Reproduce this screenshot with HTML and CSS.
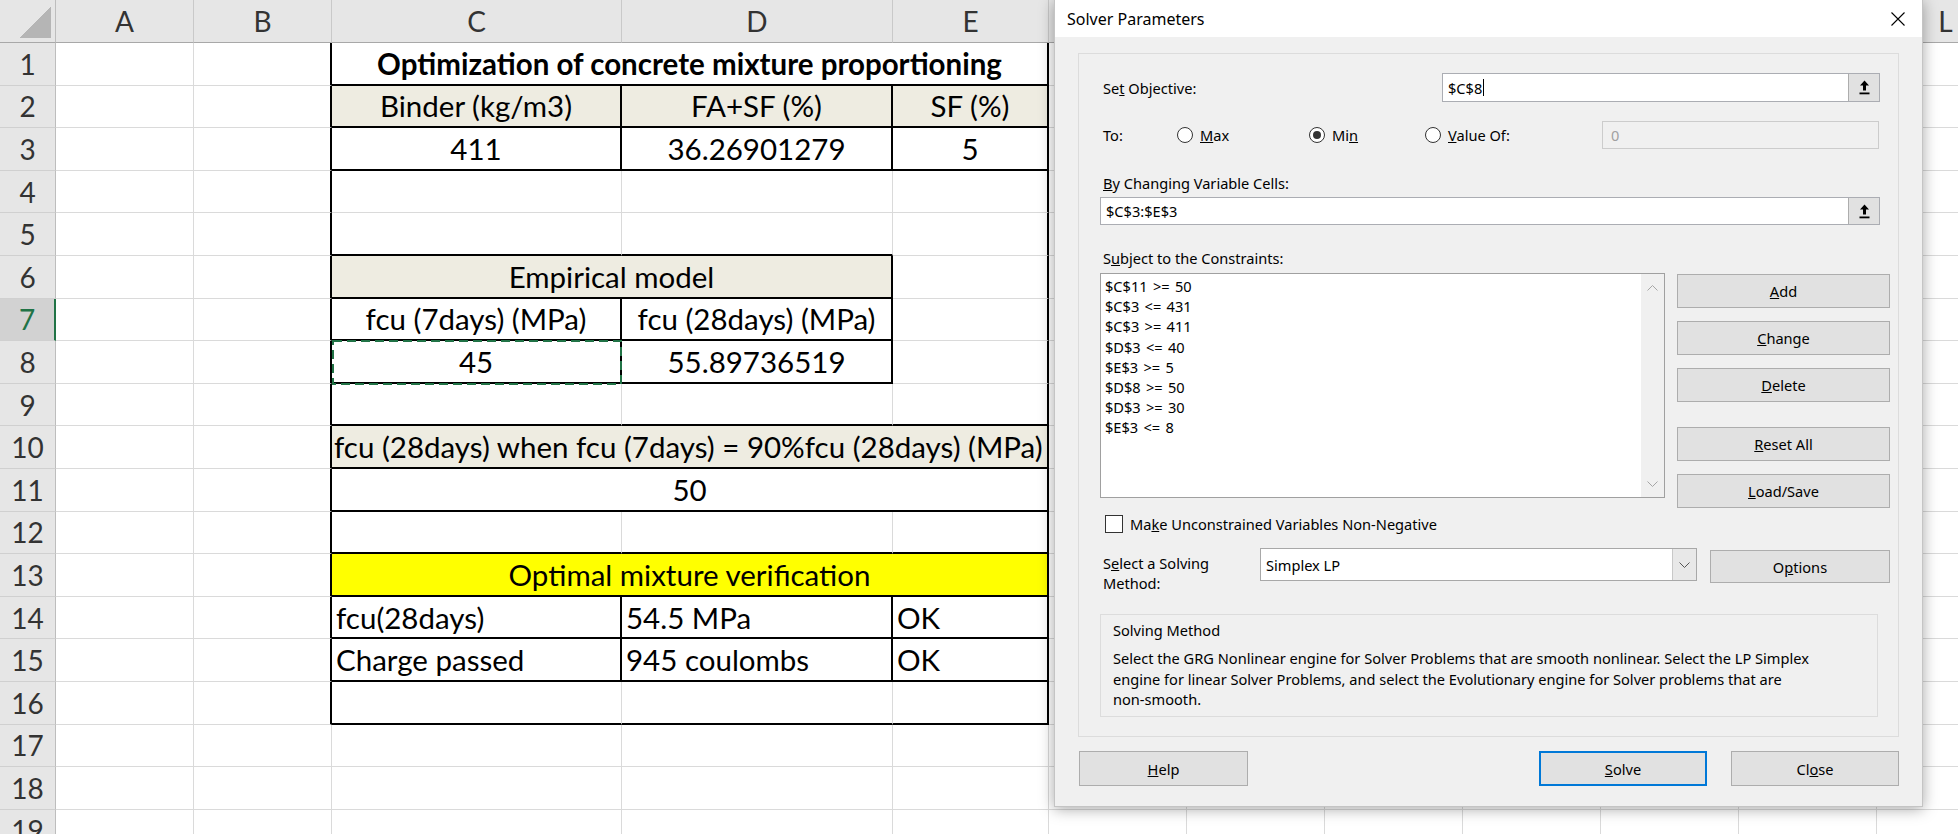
FILE: index.html
```html
<!DOCTYPE html>
<html>
<head>
<meta charset="utf-8">
<title>Solver Parameters</title>
<link rel="stylesheet" href="styles.css">
</head>
<body>
<div class="sheet">
  <div class="corner"><div class="tri"></div></div>
  <div class="ch">A</div><div class="ch">B</div><div class="ch">C</div><div class="ch">D</div><div class="ch">E</div>
  <div class="ch">F</div><div class="ch">G</div><div class="ch">H</div><div class="ch">I</div><div class="ch">J</div><div class="ch">K</div><div class="ch">L</div>

  <div class="rh">1</div><div class="c"></div><div class="c kr"></div>
  <div class="c s3 kr kb bold">Optimization of concrete mixture proportioning</div><div class="rest"></div>

  <div class="rh">2</div><div class="c"></div><div class="c kr"></div>
  <div class="c tan kr kb">Binder (kg/m3)</div><div class="c tan kr kb">FA+SF (%)</div><div class="c tan kr kb">SF (%)</div><div class="rest"></div>

  <div class="rh">3</div><div class="c"></div><div class="c kr"></div>
  <div class="c kr kb">411</div><div class="c kr kb">36.26901279</div><div class="c kr kb">5</div><div class="rest"></div>

  <div class="rh">4</div><div class="c"></div><div class="c kr"></div>
  <div class="c"></div><div class="c"></div><div class="c kr"></div><div class="rest"></div>

  <div class="rh">5</div><div class="c"></div><div class="c kr"></div>
  <div class="c kb"></div><div class="c kb"></div><div class="c kr"></div><div class="rest"></div>

  <div class="rh">6</div><div class="c"></div><div class="c kr"></div>
  <div class="c s2 tan kr kb">Empirical model</div><div class="c kr"></div><div class="rest"></div>

  <div class="rh sel">7</div><div class="c"></div><div class="c kr"></div>
  <div class="c kr kb">fcu (7days) (MPa)</div><div class="c kr kb">fcu (28days) (MPa)</div><div class="c kr"></div><div class="rest"></div>

  <div class="rh">8</div><div class="c"></div><div class="c kr"></div>
  <div class="c kr kb vis">45<svg class="marq" width="290" height="45" viewBox="0 0 290 45"><rect x="1" y="1" width="288" height="43" fill="none" stroke="#217346" stroke-width="2" stroke-dasharray="9 5"/></svg></div><div class="c kr kb">55.89736519</div><div class="c kr"></div><div class="rest"></div>

  <div class="rh">9</div><div class="c"></div><div class="c kr"></div>
  <div class="c kb"></div><div class="c kb"></div><div class="c kr kb"></div><div class="rest"></div>

  <div class="rh">10</div><div class="c"></div><div class="c kr"></div>
  <div class="c s3 tan kr kb lft">fcu (28days) when fcu (7days) = 90%fcu (28days) (MPa)</div><div class="rest"></div>

  <div class="rh">11</div><div class="c"></div><div class="c kr"></div>
  <div class="c s3 kr kb">50</div><div class="rest"></div>

  <div class="rh">12</div><div class="c"></div><div class="c kr"></div>
  <div class="c kb"></div><div class="c kb"></div><div class="c kr kb"></div><div class="rest"></div>

  <div class="rh">13</div><div class="c"></div><div class="c kr"></div>
  <div class="c s3 yel kr kb">Optimal mixture verification</div><div class="rest"></div>

  <div class="rh">14</div><div class="c"></div><div class="c kr"></div>
  <div class="c kr kb lft">fcu(28days)</div><div class="c kr kb lft">54.5 MPa</div><div class="c kr kb lft">OK</div><div class="rest"></div>

  <div class="rh">15</div><div class="c"></div><div class="c kr"></div>
  <div class="c kr kb lft">Charge passed</div><div class="c kr kb lft">945 coulombs</div><div class="c kr kb lft">OK</div><div class="rest"></div>

  <div class="rh">16</div><div class="c"></div><div class="c kr"></div>
  <div class="c kb"></div><div class="c kb"></div><div class="c kr kb"></div><div class="rest"></div>

  <div class="rh">17</div><div class="c"></div><div class="c"></div>
  <div class="c"></div><div class="c"></div><div class="c"></div><div class="rest"></div>

  <div class="rh">18</div><div class="c"></div><div class="c"></div>
  <div class="c"></div><div class="c"></div><div class="c"></div><div class="rest"></div>

  <div class="rh">19</div><div class="c"></div><div class="c"></div>
  <div class="c"></div><div class="c"></div><div class="c"></div><div class="rest"></div>
</div>

<div class="dialog">
  <div class="titlebar">
    <span>Solver Parameters</span>
    <svg class="xbtn" width="14" height="14" viewBox="0 0 14 14"><path d="M0.5 0.5 L13.5 13.5 M13.5 0.5 L0.5 13.5" stroke="#000" stroke-width="1.1" fill="none"/></svg>
  </div>
  <div class="dbody">
    <div class="group">
      <div class="r-obj">
        <span class="lbl">Se<u>t</u> Objective:</span>
        <div class="ref obj">
          <span class="val">$C$8<i class="caret"></i></span>
          <span class="pick"><svg width="11" height="15" viewBox="0 0 11 15"><path d="M5.5 0.5 L10 5.5 H7 V10.5 H4 V5.5 H1 Z" fill="#000"/><rect x="0.5" y="12.5" width="10" height="1.8" fill="#000"/></svg></span>
        </div>
      </div>
      <div class="r-to">
        <span class="to">To:</span>
        <span class="opt w-max"><span class="rdo"></span><span><u>M</u>ax</span></span>
        <span class="opt w-min"><span class="rdo"><span class="dot"></span></span><span>Mi<u>n</u></span></span>
        <span class="opt"><span class="rdo"></span><span><u>V</u>alue Of:</span></span>
        <span class="valbox">0</span>
      </div>
      <div class="lbl l-by"><u>B</u>y Changing Variable Cells:</div>
      <div class="ref full">
        <span class="val">$C$3:$E$3</span>
        <span class="pick"><svg width="11" height="15" viewBox="0 0 11 15"><path d="M5.5 0.5 L10 5.5 H7 V10.5 H4 V5.5 H1 Z" fill="#000"/><rect x="0.5" y="12.5" width="10" height="1.8" fill="#000"/></svg></span>
      </div>
      <div class="lbl l-sub">S<u>u</u>bject to the Constraints:</div>
      <div class="cons">
        <div class="list">
          <div class="items">
            <div>$C$11 &gt;= 50</div>
            <div>$C$3 &lt;= 431</div>
            <div>$C$3 &gt;= 411</div>
            <div>$D$3 &lt;= 40</div>
            <div>$E$3 &gt;= 5</div>
            <div>$D$8 &gt;= 50</div>
            <div>$D$3 &gt;= 30</div>
            <div>$E$3 &lt;= 8</div>
          </div>
          <div class="vscroll">
            <svg width="11" height="6" viewBox="0 0 11 6"><path d="M0.5 5.5 L5.5 0.5 L10.5 5.5" stroke="#a6a6a6" fill="none"/></svg>
            <svg width="11" height="6" viewBox="0 0 11 6"><path d="M0.5 0.5 L5.5 5.5 L10.5 0.5" stroke="#a6a6a6" fill="none"/></svg>
          </div>
        </div>
        <div class="btncol">
          <div class="btn b-add"><span><u>A</u>dd</span></div>
          <div class="btn b-gap"><span><u>C</u>hange</span></div>
          <div class="btn b-gap"><span><u>D</u>elete</span></div>
          <div class="btn b-reset"><span><u>R</u>eset All</span></div>
          <div class="btn b-gap"><span><u>L</u>oad/Save</span></div>
        </div>
      </div>
      <div class="chk-row"><span class="chk"></span><span>Ma<u>k</u>e Unconstrained Variables Non-Negative</span></div>
      <div class="method-row">
        <div class="mlbl">S<u>e</u>lect a Solving<br>Method:</div>
        <div class="combo">
          <span class="ctext">Simplex LP</span>
          <span class="arrow"><svg width="11" height="6" viewBox="0 0 11 6"><path d="M0.5 0.5 L5.5 5.5 L10.5 0.5" stroke="#555" fill="none"/></svg></span>
        </div>
        <div class="btn opts"><span>O<u>p</u>tions</span></div>
      </div>
      <div class="mbox">
        <div class="mtitle">Solving Method</div>
        <div class="mdesc">Select the GRG Nonlinear engine for Solver Problems that are smooth nonlinear. Select the LP Simplex<br>engine for linear Solver Problems, and select the Evolutionary engine for Solver problems that are<br>non-smooth.</div>
      </div>
    </div>
    <div class="footer">
      <div class="btn help"><span><u>H</u>elp</span></div>
      <div class="spacer"></div>
      <div class="btn solve"><span><u>S</u>olve</span></div>
      <div class="btn close"><span>Cl<u>o</u>se</span></div>
    </div>
  </div>
</div>
</body>
</html>
```

FILE: styles.css
```css
* { box-sizing: border-box; }
html, body { margin: 0; padding: 0; }
body {
  width: 1958px;
  height: 834px;
  overflow: hidden;
  position: relative;
  background: #fff;
  font-family: Lato, "Liberation Sans", sans-serif;
}

/* ---------- spreadsheet ---------- */
.sheet {
  display: grid;
  grid-template-columns: 56px 138px 138px 290px 271px 156px repeat(7, 138px);
  grid-template-rows: 43px repeat(19, 42.6px);
  font-size: 29.5px;
  color: #000;
}
.corner {
  background: #e6e6e6;
  border-right: 1px solid #bdbdbd;
  border-bottom: 1px solid #a8a8a8;
  display: flex;
  align-items: flex-end;
  justify-content: flex-end;
  padding: 0 4px 4px 0;
}
.tri {
  width: 32px;
  height: 32px;
  background: linear-gradient(to bottom right, transparent 50%, #b5b5b5 50%);
}
.ch {
  background: #e6e6e6;
  border-right: 1px solid #c9c9c9;
  border-bottom: 1px solid #a8a8a8;
  display: flex;
  align-items: center;
  justify-content: center;
  color: #333;
  font-size: 28px;
}
.rh {
  background: #e6e6e6;
  border-right: 1px solid #bdbdbd;
  border-bottom: 1px solid #d0d0d0;
  display: flex;
  align-items: center;
  justify-content: center;
  color: #333;
  font-size: 28px;
}
.rh.sel {
  background: #d2d2d2;
  color: #217346;
  border-right: 2px solid #217346;
}
.c {
  border-right: 1px solid #dadada;
  border-bottom: 1px solid #dadada;
  display: flex;
  align-items: center;
  justify-content: center;
  white-space: nowrap;
  overflow: hidden;
  position: relative;
}
.c.vis { overflow: visible; z-index: 1; }
.rest {
  grid-column: span 7;
  border-bottom: 1px solid #dadada;
  background: repeating-linear-gradient(90deg, transparent 0 137px, #dadada 137px 138px);
}
.kr { border-right: 2px solid #000; }
.kb { border-bottom: 2px solid #000; }
.s2 { grid-column: span 2; }
.s3 { grid-column: span 3; }
.tan { background: #eeece1; }
.yel { background: #ffff00; }
.lft { justify-content: flex-start; padding-left: 4px; }
.s3.lft { padding-left: 2px; }
.bold { font-weight: 700; }
.marq {
  position: absolute;
  left: 0;
  top: -1px;
}

/* ---------- dialog ---------- */
.dialog {
  position: absolute;
  left: 1054px;
  top: 0;
  width: 869px;
  height: 807px;
  background: #f0f0f0;
  border: 1px solid #c4c4c4;
  border-top: none;
  box-shadow: 0 2px 14px rgba(0, 0, 0, 0.35);
  display: flex;
  flex-direction: column;
  font-family: "Noto Sans", "Open Sans", sans-serif;
  font-size: 14.6px;
  color: #000;
  z-index: 2;
}
.titlebar {
  height: 37px;
  background: #fff;
  display: flex;
  align-items: center;
  justify-content: space-between;
  padding: 0 17px 0 12px;
  font-size: 16px;
}
.dbody {
  flex: 1;
  display: flex;
  flex-direction: column;
  padding: 16px 23px 0 23px;
}
.group {
  height: 684px;
  border: 1px solid #dcdcdc;
  padding: 0 8px 0 21px;
  display: flex;
  flex-direction: column;
}
.lbl { padding-left: 3px; line-height: 20px; }
.r-obj {
  margin-top: 19px;
  height: 29px;
  display: flex;
  align-items: center;
}
.ref {
  background: #fff;
  border: 1px solid #abadb3;
  display: flex;
  align-items: stretch;
}
.ref.obj { width: 438px; height: 29px; margin-left: auto; margin-right: 10px; }
.ref.full { width: 780px; height: 28px; margin-top: 4px; }
.val {
  flex: 1;
  display: flex;
  align-items: center;
  padding-left: 5px;
}
.caret {
  display: inline-block;
  width: 1px;
  height: 17px;
  background: #000;
  margin-left: 1px;
}
.pick {
  width: 31px;
  background: #e1e1e1;
  border-left: 1px solid #adadad;
  display: flex;
  align-items: center;
  justify-content: center;
}
.r-to {
  margin-top: 19px;
  height: 28px;
  display: flex;
  align-items: center;
}
.to { width: 77px; padding-left: 3px; }
.opt { display: flex; align-items: center; gap: 7px; }
.w-max { width: 132px; }
.w-min { width: 116px; }
.rdo {
  width: 16px;
  height: 16px;
  border-radius: 50%;
  border: 1px solid #333;
  background: #fff;
  display: flex;
  align-items: center;
  justify-content: center;
}
.dot {
  width: 8px;
  height: 8px;
  border-radius: 50%;
  background: #333;
}
.valbox {
  width: 277px;
  height: 28px;
  margin-left: auto;
  margin-right: 11px;
  background: #f0f0f0;
  border: 1px solid #cccccc;
  color: #a0a0a0;
  display: flex;
  align-items: center;
  padding-left: 8px;
}
.l-by { margin-top: 24px; }
.l-sub { margin-top: 23px; }
.cons {
  margin-top: 5px;
  display: flex;
  align-items: flex-start;
}
.list {
  width: 565px;
  height: 225px;
  border: 1px solid #a0a0a0;
  background: #fff;
  display: flex;
}
.items {
  flex: 1;
  padding: 2px 0 0 4px;
  line-height: 20.2px;
  word-spacing: 1.5px;
}
.vscroll {
  width: 23px;
  background: #f0f0f0;
  display: flex;
  flex-direction: column;
  justify-content: space-between;
  align-items: center;
  padding: 11px 0 10px;
}
.btncol {
  margin-left: 12px;
  width: 213px;
  display: flex;
  flex-direction: column;
}
.btn {
  height: 34px;
  background: #e1e1e1;
  border: 1px solid #adadad;
  display: flex;
  align-items: center;
  justify-content: center;
}
.b-add { margin-top: 1px; }
.b-gap { margin-top: 13px; }
.b-reset { margin-top: 25px; }
.chk-row {
  margin-top: 6px;
  height: 19px;
  padding-left: 5px;
  display: flex;
  align-items: center;
  gap: 7px;
}
.chk {
  width: 18px;
  height: 18px;
  border: 1px solid #333;
  background: #fff;
}
.method-row {
  margin-top: 15px;
  display: flex;
  align-items: flex-start;
}
.mlbl {
  width: 160px;
  padding: 5px 0 0 3px;
  line-height: 20px;
}
.combo {
  width: 437px;
  height: 33px;
  background: #fff;
  border: 1px solid #a8a8a8;
  display: flex;
}
.ctext {
  flex: 1;
  display: flex;
  align-items: center;
  padding-left: 5px;
}
.arrow {
  width: 24px;
  background: #e8e8e8;
  border-left: 1px solid #c8c8c8;
  display: flex;
  align-items: center;
  justify-content: center;
}
.btn.opts {
  width: 180px;
  height: 33px;
  margin-left: 13px;
  margin-top: 2px;
}
.mbox {
  margin-top: 21px;
  width: 778px;
  height: 103px;
  border: 1px solid #dcdcdc;
  padding: 5px 12px;
}
.mtitle { line-height: 20px; }
.mdesc { margin-top: 8px; line-height: 20.5px; white-space: nowrap; }
.footer {
  margin-top: 14px;
  display: flex;
  height: 35px;
}
.btn.help { width: 169px; height: 35px; margin-left: 1px; }
.spacer { flex: 1; }
.btn.solve { width: 168px; height: 35px; border: 2px solid #0078d7; }
.btn.close { width: 168px; height: 35px; margin-left: 24px; }
```
